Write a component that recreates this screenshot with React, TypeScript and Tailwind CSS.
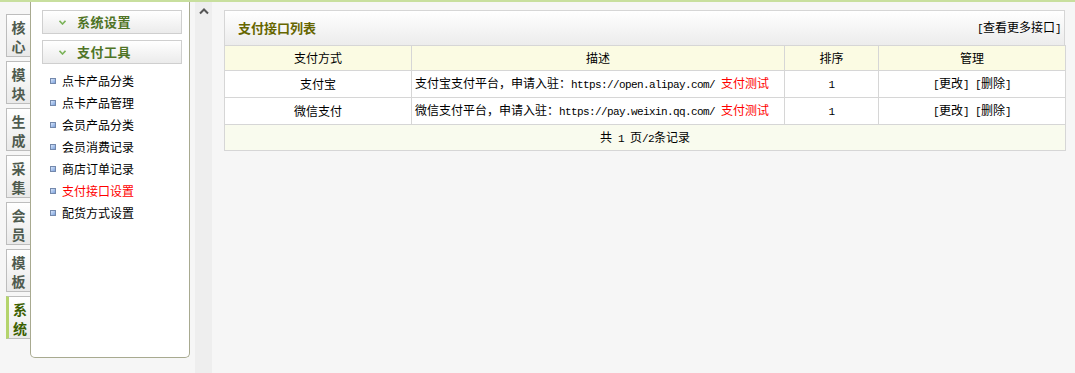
import React from "react";

const cjk = { fontFamily: '"Noto Sans CJK SC", "Noto Sans", sans-serif' };
const mono = { fontFamily: '"Liberation Mono", "DejaVu Sans Mono", monospace' };

const tabs = ["核心", "模块", "生成", "采集", "会员", "模板", "系统"];
const menu = ["点卡产品分类", "点卡产品管理", "会员产品分类", "会员消费记录", "商店订单记录", "支付接口设置", "配货方式设置"];

function M({ children }: { children: React.ReactNode }) {
  return (
    <span style={mono} className="text-[11px] tracking-[-0.6px] whitespace-pre">
      {children}
    </span>
  );
}

function Tab({ label, active }: { label: string; active: boolean }) {
  return (
    <div
      className={
        "w-[24px] h-[43px] border border-r-0 border-[#bdbdbd] bg-gradient-to-b from-white to-[#e9e9e9] flex flex-col items-center justify-center text-[14px] leading-[19px] font-bold pt-[2px] " +
        (active ? "border-l-[3px] border-l-[#b4d46c] text-[#3b5e00] pl-[1px]" : "text-[#4f5b4f]")
      }
    >
      <span>{label[0]}</span>
      <span>{label[1]}</span>
    </div>
  );
}

function HeadBtn({ label }: { label: string }) {
  return (
    <div className="h-[24px] border border-[#cfcfcf] bg-gradient-to-b from-white to-[#ebebeb] flex items-center">
      <svg className="ml-[16px]" width="7" height="5" viewBox="0 0 7 5">
        <path d="M0.5 0.8 L3.5 4 L6.5 0.8" fill="none" stroke="#7cb35a" strokeWidth="1.6" />
      </svg>
      <span className="ml-[11px] text-[13px] font-bold tracking-[0.5px] text-[#4f7426]">{label}</span>
    </div>
  );
}

const cell = "border border-[#d6d6d6] text-[12px] text-black";

export default function App() {
  return (
    <div className="w-[1075px] h-[373px] bg-[#f6f6f6] border-t-2 border-[#c8df9e] flex overflow-hidden" style={cjk}>
      <div className="w-[30px] flex flex-col gap-[4px] pt-[12px] pl-[6px]">
        {tabs.map((t, i) => (
          <Tab key={t} label={t} active={i === 6} />
        ))}
      </div>
      <div className="w-[160px] h-[356px] bg-white border border-t-0 border-[#a8aa90] rounded-b-[5px] pt-[8px] pl-[11px] pr-[7px]">
        <HeadBtn label="系统设置" />
        <div className="h-[6px]" />
        <HeadBtn label="支付工具" />
        <div className="mt-[6px] flex flex-col">
          {menu.map((m, i) => (
            <div key={m} className="h-[22px] flex items-center pl-[8px]">
              <span className="w-[6px] h-[6px] border border-[#7489ac] bg-gradient-to-br from-[#d8e6fb] to-[#7da2dc]" />
              <span className={"ml-[6px] text-[12px] " + (i === 5 ? "text-[#ff0000]" : "text-black")}>{m}</span>
            </div>
          ))}
        </div>
      </div>
      <div className="w-[5px]" />
      <div className="w-[17px] h-full bg-[#eeeeee] flex justify-center pt-[5px]">
        <svg width="10" height="8" viewBox="0 0 10 8">
          <path d="M1 6.5 L5 2.5 L9 6.5" fill="none" stroke="#555" strokeWidth="2" />
        </svg>
      </div>
      <div className="flex-1 pl-[12px] pr-[10px] pt-[8px]">
        <div className="w-[841px]">
          <div className="h-[35px] border border-b-0 border-[#d6d6d6] bg-gradient-to-b from-white to-[#ececec] flex items-center justify-between pl-[13px] pr-[3px]">
            <span className="text-[13px] font-bold text-[#666600]">支付接口列表</span>
            <span className="text-[12px] text-black">
              <M>[</M>查看更多接口<M>]</M>
            </span>
          </div>
          <table className="w-[841px] border-collapse table-fixed">
            <colgroup>
              <col className="w-[187px]" />
              <col className="w-[373px]" />
              <col className="w-[94px]" />
              <col className="w-[187px]" />
            </colgroup>
            <tbody>
              <tr className="h-[25px] bg-[#fbfbe3]">
                <td className={cell + " text-center"}>支付方式</td>
                <td className={cell + " text-center"}>描述</td>
                <td className={cell + " text-center"}>排序</td>
                <td className={cell + " text-center"}>管理</td>
              </tr>
              <tr className="h-[27px] bg-white">
                <td className={cell + " text-center"}>支付宝</td>
                <td className={cell + " pl-[3px] whitespace-nowrap"}>
                  支付宝支付平台，申请入驻：<M>https://open.alipay.com/ </M>
                  <span className="text-[#ff0000]">支付测试</span>
                </td>
                <td className={cell + " text-center"}>
                  <M>1</M>
                </td>
                <td className={cell + " text-center"}>
                  <M>[</M>更改<M>] [</M>删除<M>]</M>
                </td>
              </tr>
              <tr className="h-[27px] bg-white">
                <td className={cell + " text-center"}>微信支付</td>
                <td className={cell + " pl-[3px] whitespace-nowrap"}>
                  微信支付平台，申请入驻：<M>https://pay.weixin.qq.com/ </M>
                  <span className="text-[#ff0000]">支付测试</span>
                </td>
                <td className={cell + " text-center"}>
                  <M>1</M>
                </td>
                <td className={cell + " text-center"}>
                  <M>[</M>更改<M>] [</M>删除<M>]</M>
                </td>
              </tr>
              <tr className="h-[26px] bg-[#f9fbee]">
                <td colSpan={4} className={cell + " text-center"}>
                  共<M> 1 </M>页<M>/2</M>条记录
                </td>
              </tr>
            </tbody>
          </table>
        </div>
      </div>
    </div>
  );
}
